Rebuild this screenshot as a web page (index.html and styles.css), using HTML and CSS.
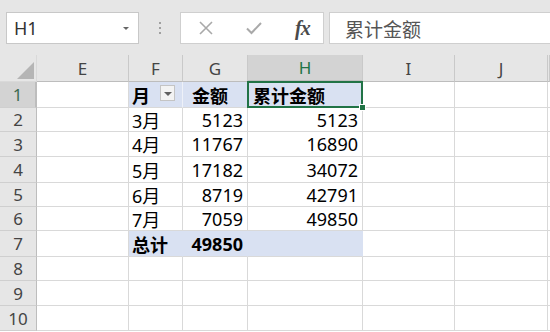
FILE: index.html
```html
<!DOCTYPE html>
<html lang="zh-CN">
<head>
    <meta charset="UTF-8">
    <title>累计金额</title>
    <link rel="stylesheet" href="styles.css">
</head>
<body>
    <div class="formula-bar">
        <div class="name-box">
            <span>H1</span>
            <span class="name-arrow"></span>
        </div>
        <div class="grip"><i></i><i></i><i></i></div>
        <div class="fx-buttons">
            <svg class="fx-icon" width="16" height="16" viewBox="0 0 16 16">
                <path d="M2 2 L14 14 M14 2 L2 14" stroke="#a9a9a9" stroke-width="1.6" fill="none"/>
            </svg>
            <svg class="fx-icon" width="18" height="16" viewBox="0 0 18 16">
                <path d="M2 8.5 L6.5 13 L16 3" stroke="#a9a9a9" stroke-width="2" fill="none"/>
            </svg>
            <span class="fx-label">fx</span>
        </div>
        <div class="formula-input">累计金额</div>
    </div>

    <div class="sheet">
        <!-- column headers -->
        <div class="hd corner"><span class="corner-tri"></span></div>
        <div class="hd col">E</div>
        <div class="hd col">F</div>
        <div class="hd col">G</div>
        <div class="hd col active-col">H</div>
        <div class="hd col">I</div>
        <div class="hd col">J</div>
        <div class="hd col"></div>

        <!-- row 1 -->
        <div class="hd row active-row">1</div>
        <div class="c"></div>
        <div class="c t-head t-first">月<span class="filter-btn"></span></div>
        <div class="c t-head t-amount">金额</div>
        <div class="c t-head selected">累计金额</div>
        <div class="c"></div>
        <div class="c"></div>
        <div class="c"></div>

        <!-- row 2 -->
        <div class="hd row">2</div>
        <div class="c"></div>
        <div class="c">3月</div>
        <div class="c num">5123</div>
        <div class="c num">5123</div>
        <div class="c"></div>
        <div class="c"></div>
        <div class="c"></div>

        <!-- row 3 -->
        <div class="hd row">3</div>
        <div class="c"></div>
        <div class="c">4月</div>
        <div class="c num">11767</div>
        <div class="c num">16890</div>
        <div class="c"></div>
        <div class="c"></div>
        <div class="c"></div>

        <!-- row 4 -->
        <div class="hd row">4</div>
        <div class="c"></div>
        <div class="c">5月</div>
        <div class="c num">17182</div>
        <div class="c num">34072</div>
        <div class="c"></div>
        <div class="c"></div>
        <div class="c"></div>

        <!-- row 5 -->
        <div class="hd row">5</div>
        <div class="c"></div>
        <div class="c">6月</div>
        <div class="c num">8719</div>
        <div class="c num">42791</div>
        <div class="c"></div>
        <div class="c"></div>
        <div class="c"></div>

        <!-- row 6 -->
        <div class="hd row">6</div>
        <div class="c"></div>
        <div class="c">7月</div>
        <div class="c num">7059</div>
        <div class="c num">49850</div>
        <div class="c"></div>
        <div class="c"></div>
        <div class="c"></div>

        <!-- row 7, totals -->
        <div class="hd row">7</div>
        <div class="c"></div>
        <div class="c t-total">总计</div>
        <div class="c t-total num">49850</div>
        <div class="c t-total"></div>
        <div class="c"></div>
        <div class="c"></div>
        <div class="c"></div>

        <!-- empty rows -->
        <div class="hd row">8</div>
        <div class="c"></div><div class="c"></div><div class="c"></div><div class="c"></div><div class="c"></div><div class="c"></div><div class="c"></div>
        <div class="hd row">9</div>
        <div class="c"></div><div class="c"></div><div class="c"></div><div class="c"></div><div class="c"></div><div class="c"></div><div class="c"></div>
        <div class="hd row">10</div>
        <div class="c"></div><div class="c"></div><div class="c"></div><div class="c"></div><div class="c"></div><div class="c"></div><div class="c"></div>
    </div>
</body>
</html>
```

FILE: styles.css
```css
body {
    margin: 0;
    width: 550px;
    height: 332px;
    overflow: hidden;
    background-color: #ffffff;
    font-family: "Noto Sans", "Noto Sans CJK SC", sans-serif;
    color: #000000;
}

/* formula bar on top */
.formula-bar {
    height: 55px;
    box-sizing: border-box;
    padding: 12px 0 11px 6px;
    background-color: #e6e6e6;
    display: flex;
    align-items: stretch;
}
.name-box {
    width: 133px;
    box-sizing: border-box;
    background-color: #ffffff;
    border: 1px solid #c8c8c8;
    display: flex;
    align-items: center;
    justify-content: space-between;
    padding: 0 9px 0 7px;
    font-size: 18px;
    color: #333333;
}
.name-arrow {
    width: 0;
    height: 0;
    border-left: 3px solid transparent;
    border-right: 3px solid transparent;
    border-top: 3px solid #666666;
}
.grip {
    width: 41px;
    display: flex;
    flex-direction: column;
    align-items: center;
    justify-content: center;
    gap: 3px;
}
.grip i {
    width: 2px;
    height: 2px;
    background-color: #a0a0a0;
}
.fx-buttons {
    width: 144px;
    box-sizing: border-box;
    background-color: #ffffff;
    border: 1px solid #cfcfcf;
    display: flex;
    align-items: center;
    padding-left: 17px;
}
.fx-icon {
    margin-right: 31px;
}
.fx-buttons .fx-icon + .fx-icon {
    margin-right: 32px;
}
.fx-label {
    font-family: "Liberation Serif", serif;
    font-style: italic;
    font-weight: bold;
    font-size: 20px;
    color: #4a4a4a;
    letter-spacing: -1px;
}
.formula-input {
    flex: 1;
    margin-left: 5px;
    background-color: #ffffff;
    border: 1px solid #cfcfcf;
    border-right: none;
    padding-left: 15px;
    font-family: "Noto Sans CJK SC", sans-serif;
    font-size: 19px;
    color: #555555;
    display: flex;
    align-items: center;
}

/* the sheet grid */
.sheet {
    display: grid;
    grid-template-columns: 37px 92px 54px 65px 115px 92px 93px 2px;
    grid-template-rows: 27px 26px 24px 25px 26px 24px 24px 26px 24px 25px 25px;
    font-size: 18px;
}
.sheet > div {
    box-sizing: border-box;
    border-right: 1px solid #d9d9d9;
    border-bottom: 1px solid #d9d9d9;
    display: flex;
    align-items: center;
    white-space: nowrap;
}
.hd {
    background-color: #e6e6e6;
    color: #444444;
    font-size: 17px;
    justify-content: center;
}
.sheet > .hd.col {
    border-right-color: #c9c9c9;
    border-bottom-color: #bdbdbd;
}
.sheet > .hd.row {
    border-right-color: #bdbdbd;
    border-bottom-color: #cfcfcf;
}
.corner {
    position: relative;
}
.corner-tri {
    position: absolute;
    right: 2px;
    bottom: 2px;
    width: 17px;
    height: 17px;
    background-color: #b5b5b5;
    clip-path: polygon(100% 0, 100% 100%, 0 100%);
}
.sheet > .active-col {
    background-color: #d3d3d3;
    color: #217346;
    border-bottom: 2px solid #217346;
}
.sheet > .active-row {
    background-color: #d3d3d3;
    color: #3d6b4f;
    border-right: 2px solid #217346;
}
.c {
    padding: 0 4px 0 3px;
}
.num {
    justify-content: flex-end;
}

/* table styling */
.sheet > .t-head {
    background-color: #d9e1f2;
    font-weight: bold;
    border-right-color: #eef1f8;
}
.t-first {
    position: relative;
}
.sheet > .t-amount {
    padding-left: 9px;
}
.sheet > .selected {
    padding-left: 5px;
}
.filter-btn {
    position: absolute;
    right: 7px;
    top: 3px;
    width: 15px;
    height: 16px;
    box-sizing: border-box;
    border: 1px solid #c4c4c4;
    background-color: #f3f3f3;
}
.filter-btn::after {
    content: "";
    position: absolute;
    left: 3px;
    top: 6px;
    border-left: 4px solid transparent;
    border-right: 4px solid transparent;
    border-top: 4px solid #606060;
}
.sheet > .t-total {
    background-color: #d9e1f2;
    font-weight: bold;
    border-right-color: #d9e1f2;
}

/* selected cell */
.selected {
    position: relative;
}
.selected::after {
    content: "";
    position: absolute;
    left: -1px;
    top: -1px;
    right: -1px;
    bottom: -1px;
    border: 2px solid #217346;
}
.selected::before {
    content: "";
    position: absolute;
    right: -4px;
    bottom: -4px;
    width: 5px;
    height: 5px;
    background-color: #217346;
    border: 1px solid #ffffff;
    z-index: 1;
}
```
